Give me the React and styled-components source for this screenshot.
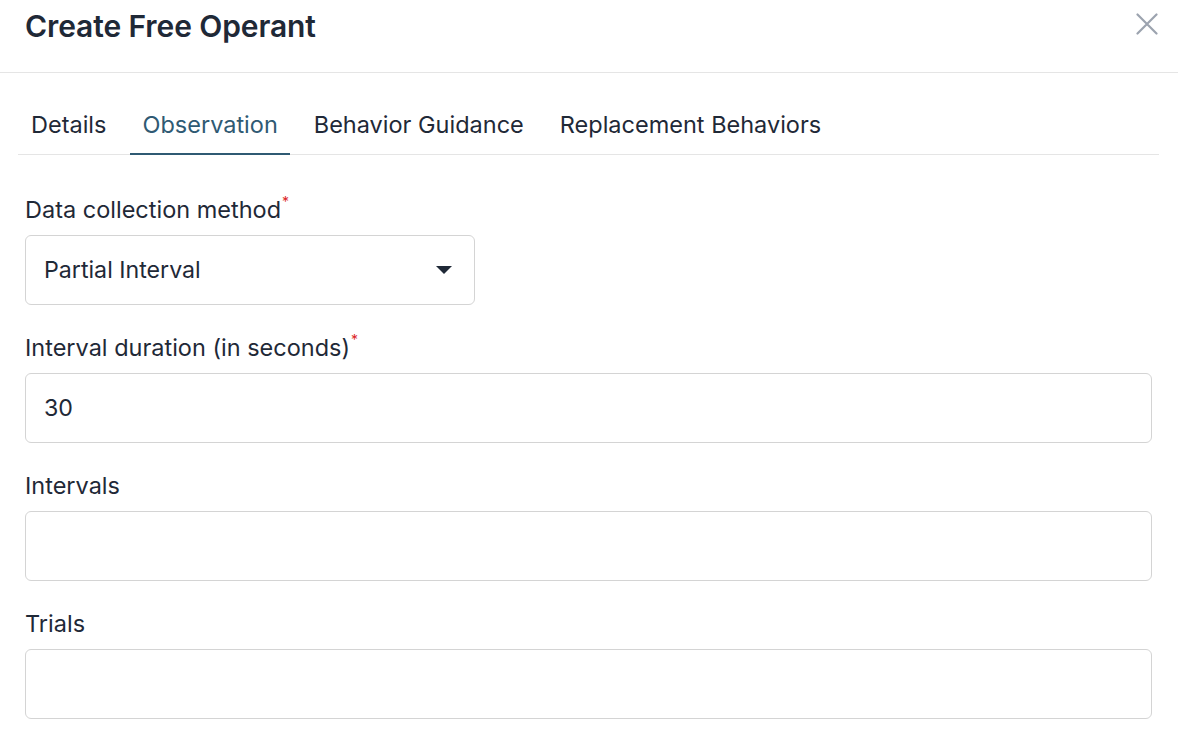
import React from 'react';
import styled, { createGlobalStyle } from 'styled-components';

const GlobalStyle = createGlobalStyle`
  * { box-sizing: border-box; }
  body {
    margin: 0;
    background: #fff;
    font-family: Inter, "Noto Sans", sans-serif;
    color: #1f2937;
  }
`;

const tabs = ['Details', 'Observation', 'Behavior Guidance', 'Replacement Behaviors'];

const fields = [
  { label: 'Interval duration (in seconds)', required: true, value: '30' },
  { label: 'Intervals', required: false, value: '' },
  { label: 'Trials', required: false, value: '' },
];

const CloseIcon = () => (
  <svg width="22" height="22" viewBox="0 0 22 22" fill="none">
    <path d="M1.5 1.5L20.5 20.5M20.5 1.5L1.5 20.5" stroke="#9ca3af" strokeWidth="2.2" strokeLinecap="round" />
  </svg>
);

const Caret = () => (
  <svg width="16" height="8" viewBox="0 0 16 8">
    <path d="M0 0H16L8 8Z" fill="#1f2937" />
  </svg>
);

export default function App() {
  return (
    <>
      <GlobalStyle />
      <Modal>
        <Header>
          <Title>Create Free Operant</Title>
          <CloseButton aria-label="Close"><CloseIcon /></CloseButton>
        </Header>
        <Body>
          <TabList>
            {tabs.map((t) => (
              <Tab key={t} $active={t === 'Observation'}>{t}</Tab>
            ))}
          </TabList>
          <Form>
            <Field>
              <Label>Data collection method<Req>*</Req></Label>
              <Select>
                <span>Partial Interval</span>
                <Caret />
              </Select>
            </Field>
            {fields.map((f) => (
              <Field key={f.label}>
                <Label>{f.label}{f.required && <Req>*</Req>}</Label>
                <Input defaultValue={f.value} />
              </Field>
            ))}
          </Form>
        </Body>
      </Modal>
    </>
  );
}

const Modal = styled.div`
  width: 1178px;
  height: 740px;
  overflow: hidden;
  background: #fff;
`;

const Header = styled.header`
  height: 73px;
  display: flex;
  align-items: flex-start;
  justify-content: space-between;
  padding: 8px 20px 0 25px;
  border-bottom: 1px solid #e5e5e5;
`;

const Title = styled.h1`
  margin: 0;
  font-size: 30px;
  line-height: 36px;
  font-weight: 560;
  color: #1f2937;
  letter-spacing: -0.1px;
`;

const CloseButton = styled.button`
  border: none;
  background: none;
  padding: 0;
  margin-top: 5px;
  width: 22px;
  height: 22px;
  cursor: pointer;
  display: flex;
`;

const Body = styled.div`
  padding: 22px 19px 0 18px;
`;

const TabList = styled.nav`
  display: flex;
  gap: 12px;
  padding-left: 1px;
  border-bottom: 1px solid #e5e5e5;
`;

const Tab = styled.div`
  padding: 15px 12px 13px;
  font-size: 23.5px;
  line-height: 30px;
  font-weight: 380;
  color: ${(p) => (p.$active ? '#2f5a73' : '#1f2937')};
  border-bottom: 2px solid ${(p) => (p.$active ? '#2f5a73' : 'transparent')};
  margin-bottom: -1px;
  white-space: nowrap;
`;

const Form = styled.div`
  padding: 40px 7px 0;
  display: flex;
  flex-direction: column;
  gap: 28px;
`;

const Field = styled.div`
  display: flex;
  flex-direction: column;
  gap: 10px;
`;

const Label = styled.label`
  font-size: 23.5px;
  line-height: 30px;
  font-weight: 380;
  color: #1f2937;
`;

const Req = styled.sup`
  color: #dc2626;
  font-size: 14px;
  margin-left: 1px;
  vertical-align: top;
  line-height: 14px;
`;

const Select = styled.div`
  width: 450px;
  height: 70px;
  border: 1px solid #d4d4d4;
  border-radius: 6px;
  display: flex;
  align-items: center;
  justify-content: space-between;
  padding: 0 22px 0 18px;
  font-size: 23.2px;
  font-weight: 380;
  color: #1f2937;
`;

const Input = styled.input`
  width: 100%;
  height: 70px;
  border: 1px solid #d4d4d4;
  border-radius: 6px;
  padding: 0 18px;
  font-family: inherit;
  font-size: 23.2px;
  font-weight: 380;
  color: #1f2937;
  outline: none;
`;
